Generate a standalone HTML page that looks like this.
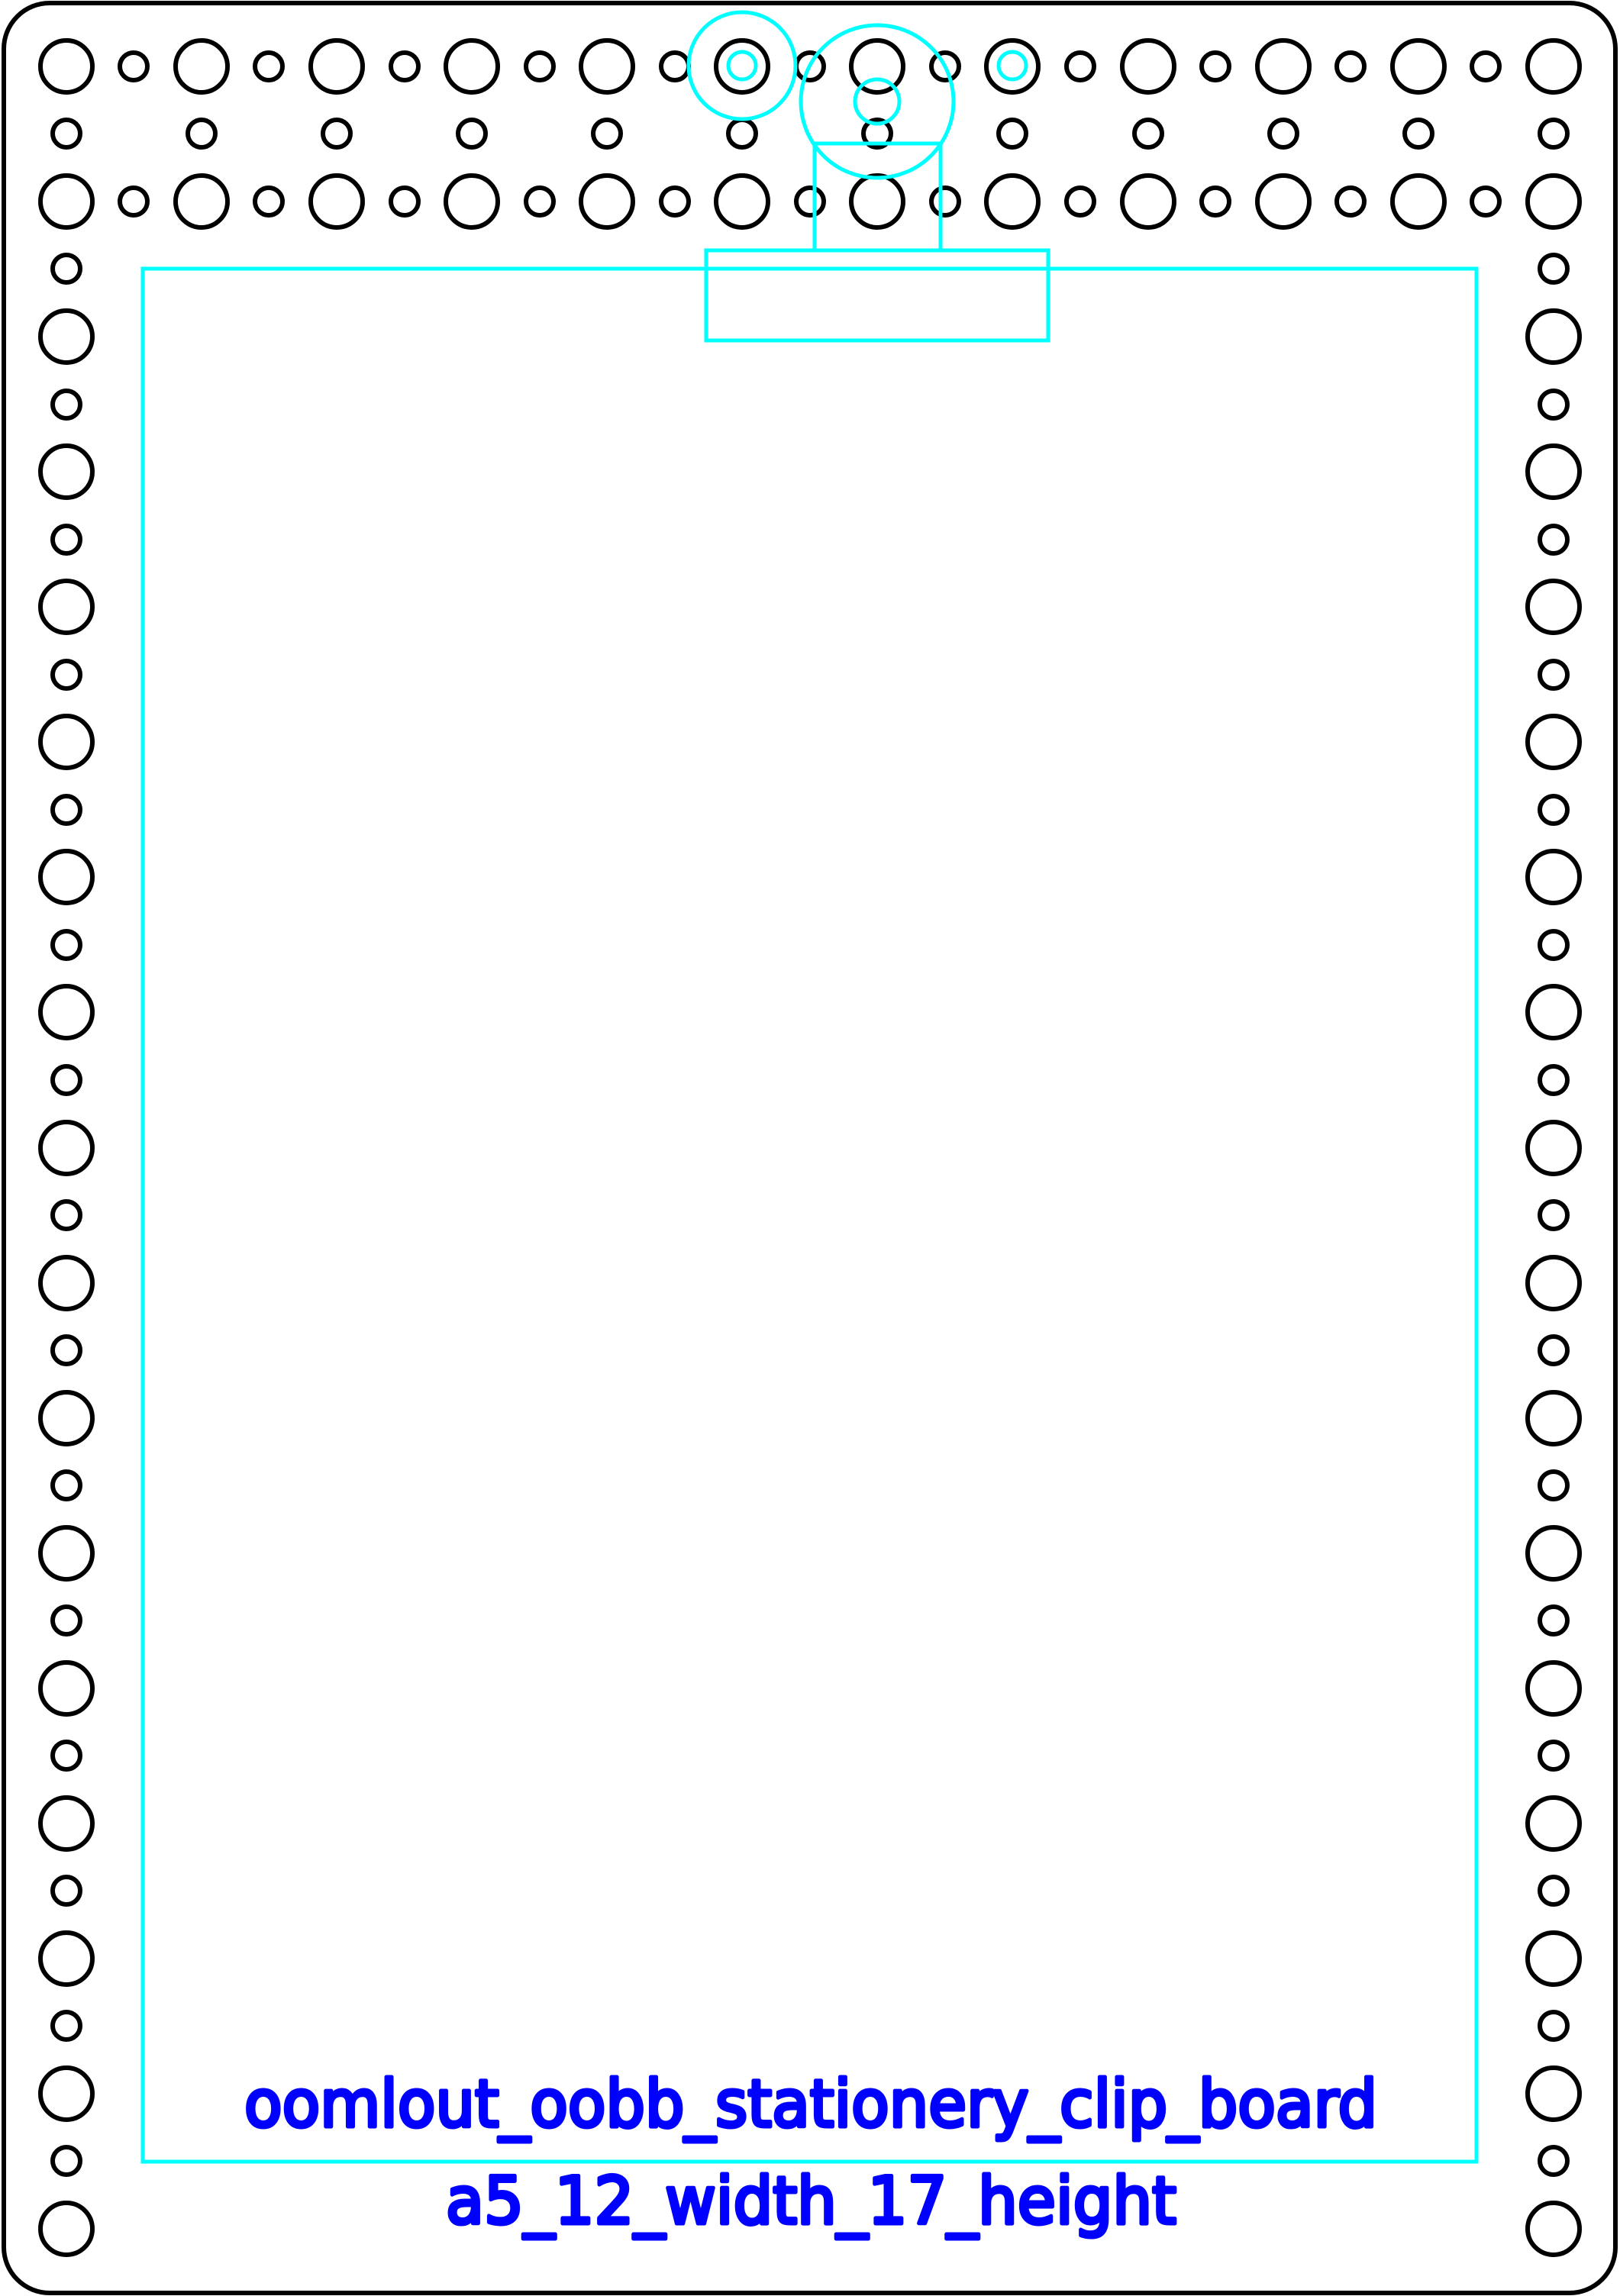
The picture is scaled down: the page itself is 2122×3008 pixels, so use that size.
<!DOCTYPE html>
<html><head><meta charset="utf-8"><style>
html,body{margin:0;padding:0;background:#fff;}
svg{display:block}
.b{fill:none;stroke:#000;stroke-width:6}
.c{fill:none;stroke:#00ffff;stroke-width:5}
.t{font-family:"DejaVu Sans","Liberation Sans",sans-serif;fill:#0000ff;stroke:#0000ff;stroke-width:5;stroke-linejoin:round}
</style></head><body>
<svg width="2122" height="3008" viewBox="0 0 2122 3008" xmlns="http://www.w3.org/2000/svg">
<rect x="5" y="4" width="2111" height="3000" rx="60" class="b"/>
<g class="b">
<circle cx="87" cy="87" r="34"/><circle cx="264" cy="87" r="34"/><circle cx="441" cy="87" r="34"/><circle cx="618" cy="87" r="34"/><circle cx="795" cy="87" r="34"/><circle cx="972" cy="87" r="34"/><circle cx="1149" cy="87" r="34"/><circle cx="1326" cy="87" r="34"/><circle cx="1504" cy="87" r="34"/><circle cx="1681" cy="87" r="34"/><circle cx="1858" cy="87" r="34"/><circle cx="2035" cy="87" r="34"/>
<circle cx="175" cy="87" r="18"/><circle cx="352" cy="87" r="18"/><circle cx="530" cy="87" r="18"/><circle cx="707" cy="87" r="18"/><circle cx="884" cy="87" r="18"/><circle cx="1061" cy="87" r="18"/><circle cx="1238" cy="87" r="18"/><circle cx="1415" cy="87" r="18"/><circle cx="1592" cy="87" r="18"/><circle cx="1769" cy="87" r="18"/><circle cx="1946" cy="87" r="18"/>
<circle cx="87" cy="175" r="18"/><circle cx="264" cy="175" r="18"/><circle cx="441" cy="175" r="18"/><circle cx="618" cy="175" r="18"/><circle cx="795" cy="175" r="18"/><circle cx="972" cy="175" r="18"/><circle cx="1149" cy="175" r="18"/><circle cx="1326" cy="175" r="18"/><circle cx="1504" cy="175" r="18"/><circle cx="1681" cy="175" r="18"/><circle cx="1858" cy="175" r="18"/><circle cx="2035" cy="175" r="18"/>
<circle cx="87" cy="264" r="34"/><circle cx="264" cy="264" r="34"/><circle cx="441" cy="264" r="34"/><circle cx="618" cy="264" r="34"/><circle cx="795" cy="264" r="34"/><circle cx="972" cy="264" r="34"/><circle cx="1149" cy="264" r="34"/><circle cx="1326" cy="264" r="34"/><circle cx="1504" cy="264" r="34"/><circle cx="1681" cy="264" r="34"/><circle cx="1858" cy="264" r="34"/><circle cx="2035" cy="264" r="34"/>
<circle cx="175" cy="264" r="18"/><circle cx="352" cy="264" r="18"/><circle cx="530" cy="264" r="18"/><circle cx="707" cy="264" r="18"/><circle cx="884" cy="264" r="18"/><circle cx="1061" cy="264" r="18"/><circle cx="1238" cy="264" r="18"/><circle cx="1415" cy="264" r="18"/><circle cx="1592" cy="264" r="18"/><circle cx="1769" cy="264" r="18"/><circle cx="1946" cy="264" r="18"/>
<circle cx="87" cy="352" r="18"/><circle cx="87" cy="530" r="18"/><circle cx="87" cy="707" r="18"/><circle cx="87" cy="884" r="18"/><circle cx="87" cy="1061" r="18"/><circle cx="87" cy="1238" r="18"/><circle cx="87" cy="1415" r="18"/><circle cx="87" cy="1592" r="18"/><circle cx="87" cy="1769" r="18"/><circle cx="87" cy="1946" r="18"/><circle cx="87" cy="2123" r="18"/><circle cx="87" cy="2300" r="18"/><circle cx="87" cy="2477" r="18"/><circle cx="87" cy="2654" r="18"/><circle cx="87" cy="2831" r="18"/>
<circle cx="2035" cy="352" r="18"/><circle cx="2035" cy="530" r="18"/><circle cx="2035" cy="707" r="18"/><circle cx="2035" cy="884" r="18"/><circle cx="2035" cy="1061" r="18"/><circle cx="2035" cy="1238" r="18"/><circle cx="2035" cy="1415" r="18"/><circle cx="2035" cy="1592" r="18"/><circle cx="2035" cy="1769" r="18"/><circle cx="2035" cy="1946" r="18"/><circle cx="2035" cy="2123" r="18"/><circle cx="2035" cy="2300" r="18"/><circle cx="2035" cy="2477" r="18"/><circle cx="2035" cy="2654" r="18"/><circle cx="2035" cy="2831" r="18"/>
<circle cx="87" cy="441" r="34"/><circle cx="87" cy="618" r="34"/><circle cx="87" cy="795" r="34"/><circle cx="87" cy="972" r="34"/><circle cx="87" cy="1149" r="34"/><circle cx="87" cy="1326" r="34"/><circle cx="87" cy="1504" r="34"/><circle cx="87" cy="1681" r="34"/><circle cx="87" cy="1858" r="34"/><circle cx="87" cy="2035" r="34"/><circle cx="87" cy="2212" r="34"/><circle cx="87" cy="2389" r="34"/><circle cx="87" cy="2566" r="34"/><circle cx="87" cy="2743" r="34"/><circle cx="87" cy="2920" r="34"/>
<circle cx="2035" cy="441" r="34"/><circle cx="2035" cy="618" r="34"/><circle cx="2035" cy="795" r="34"/><circle cx="2035" cy="972" r="34"/><circle cx="2035" cy="1149" r="34"/><circle cx="2035" cy="1326" r="34"/><circle cx="2035" cy="1504" r="34"/><circle cx="2035" cy="1681" r="34"/><circle cx="2035" cy="1858" r="34"/><circle cx="2035" cy="2035" r="34"/><circle cx="2035" cy="2212" r="34"/><circle cx="2035" cy="2389" r="34"/><circle cx="2035" cy="2566" r="34"/><circle cx="2035" cy="2743" r="34"/><circle cx="2035" cy="2920" r="34"/>
</g>
<g class="c">
<rect x="187" y="352" width="1747" height="2480"/>
<circle cx="972" cy="86" r="70"/>
<circle cx="972" cy="86" r="18"/>
<circle cx="1326" cy="86" r="18"/>
<circle cx="1149" cy="133" r="100"/>
<circle cx="1149" cy="133" r="29"/>
<rect x="1067" y="188" width="165" height="140"/>
<rect x="925" y="328" width="448" height="118"/>
</g>
<text class="t" x="320" y="2786" font-size="86" textLength="1484" lengthAdjust="spacingAndGlyphs">oomlout_oobb_stationery_clip_board</text>
<text class="t" x="584" y="2913" font-size="86" textLength="957" lengthAdjust="spacingAndGlyphs">a5_12_width_17_height</text>
</svg>
</body></html>
